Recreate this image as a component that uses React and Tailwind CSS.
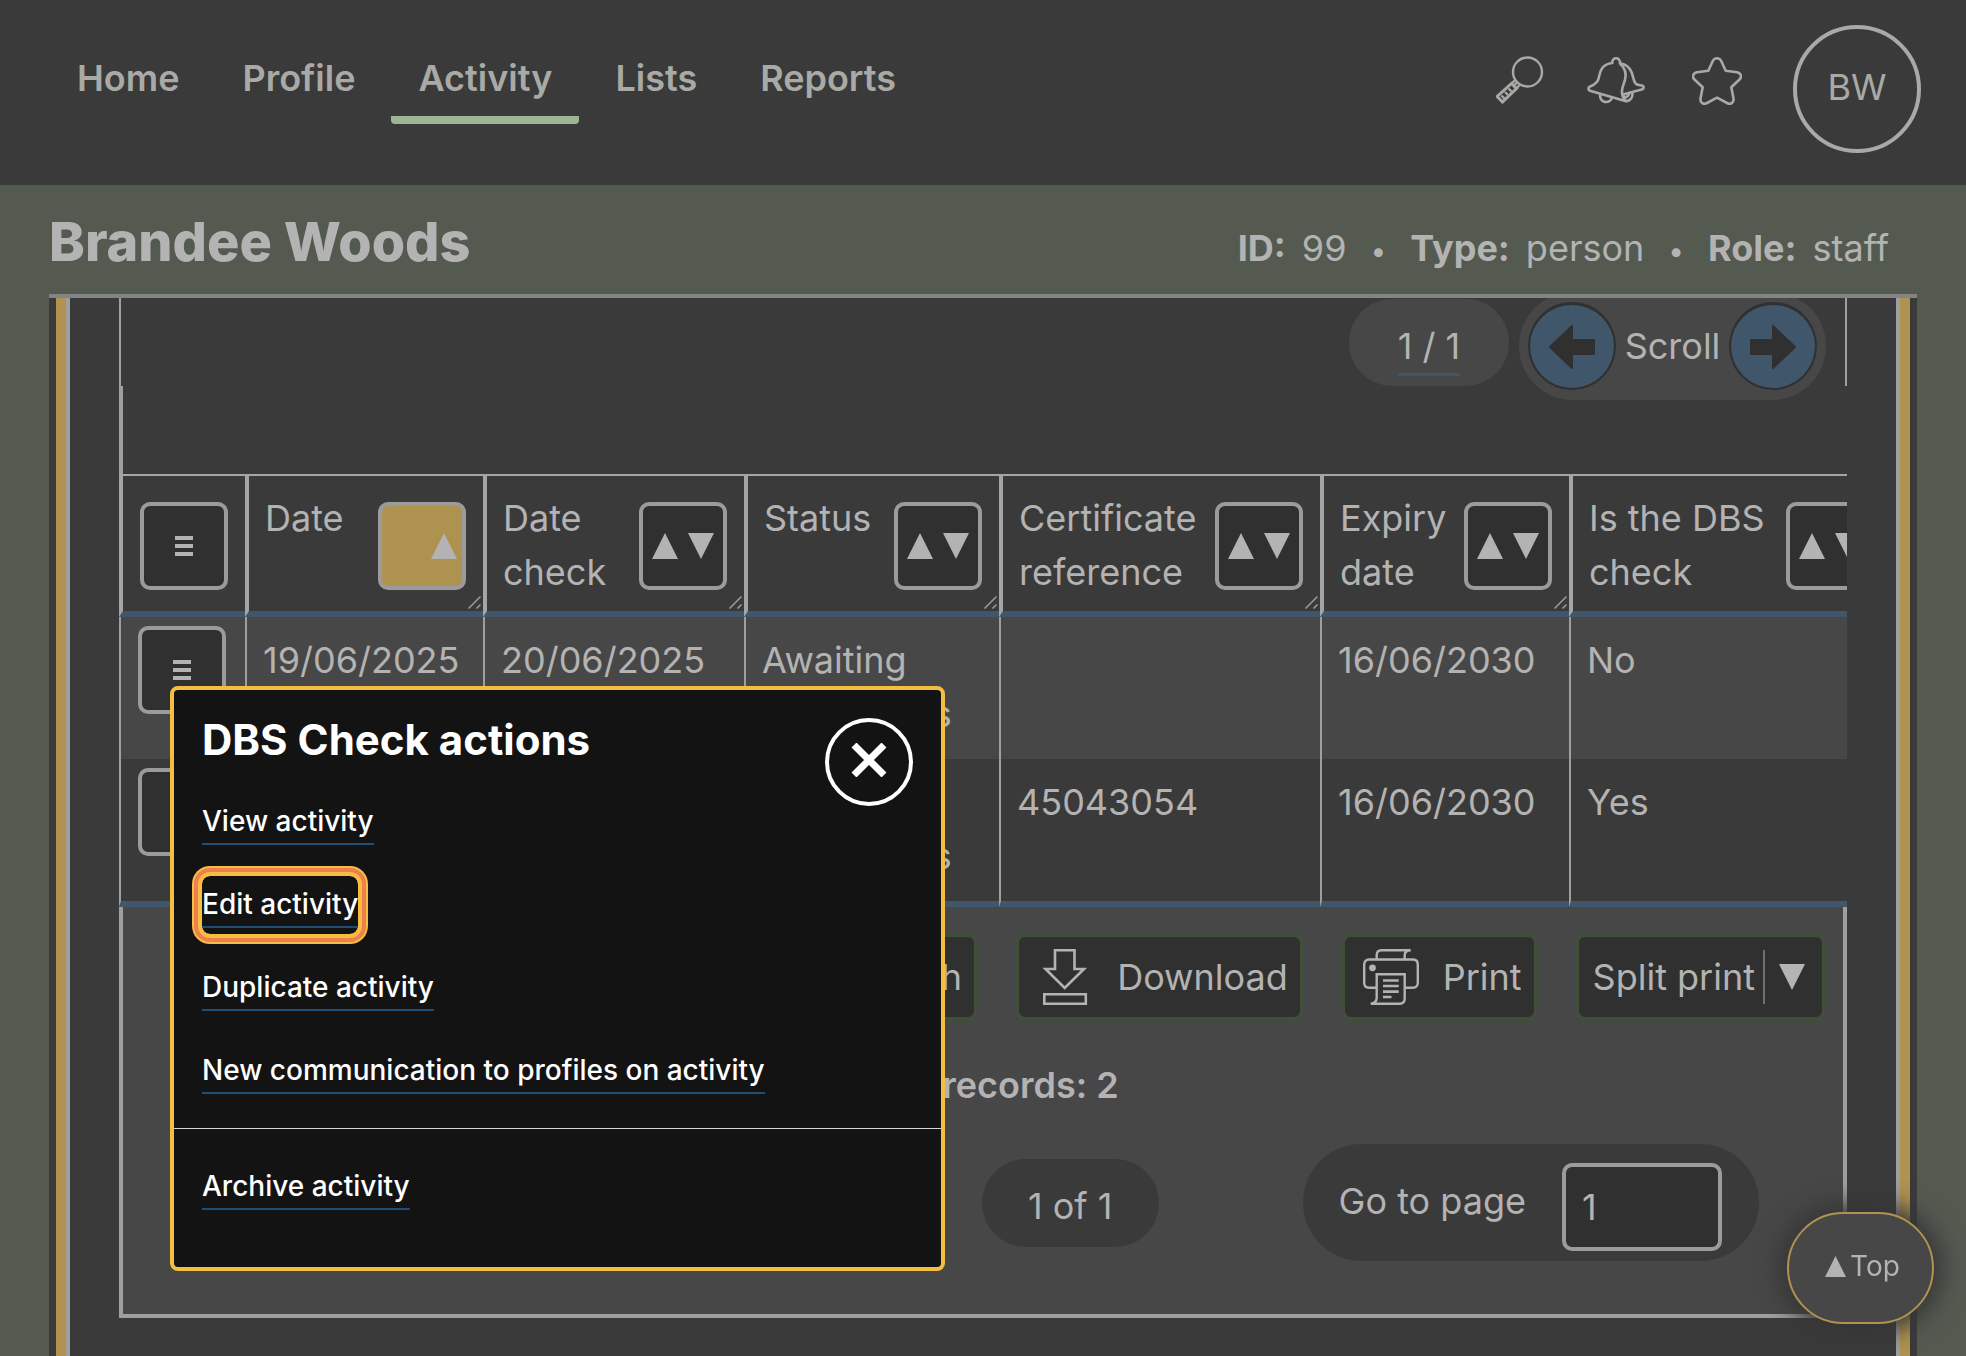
import React from "react";

const NAV = ["Home", "Profile", "Activity", "Lists", "Reports"];

const COLUMNS = [
  { label: "Date", width: "w-[238px]", active: true },
  { label: "Date check", width: "w-[261px]" },
  { label: "Status", width: "w-[255px]" },
  { label: "Certificate reference", width: "w-[321px]" },
  { label: "Expiry date", width: "w-[249px]" },
  { label: "Is the DBS check", width: "w-[322px]" },
];

const ROWS = [
  ["19/06/2025", "20/06/2025", "Awaiting documents", "", "16/06/2030", "No"],
  ["", "", "Awaiting documents", "45043054", "16/06/2030", "Yes"],
];

const ACTIONS = [
  "View activity",
  "Edit activity",
  "Duplicate activity",
  "New communication to profiles on activity",
];

function SearchIcon() {
  return (
    <svg width="48" height="48" viewBox="0 0 48 48" fill="none" stroke="currentColor" strokeWidth="2.400" aria-hidden="true">
      <circle cx="31.500" cy="16" r="14.500" />
      <path d="M21.500 26l-3.500 3.500M18.500 24.500l-3 3.500M23.500 29l-3 3.500" />
      <path d="M15.500 27.500l5 5L6.500 46 1.200 40.500z" strokeWidth="3" />
      <path d="M5.500 39.500l3 3M9 36l3 3M12.500 32.500l3 3" />
    </svg>
  );
}

function BellIcon() {
  return (
    <svg width="58" height="48" viewBox="0 0 58 48" fill="none" stroke="currentColor" strokeWidth="2.600" strokeLinejoin="round" aria-hidden="true">
      <path d="M25.300 6C25 2.500 27 1.300 29 1.300S33.200 2.500 33 6.500C38 11 40 16 38 23c-2 6-3.500 9-3 13 .5 4 2 6.500 4 8.200L3 33.800C1 33.200.8 30.500 3 29.500c5-2 7-3.500 8.300-7C12.500 18 12.500 15 15 11.500c2-3 6-5 10.300-5.500z" />
      <path d="M33 6.500c6 .5 9.500 4 11.500 8.500 1.500 4 2 9 4 11.500 1.500 1.500 4.500 1.500 7 2.200 1.500.8 1.500 3 0 3.600L36 37.500" />
      <path d="M13 37.500c0 9 9 9.500 12 3.500M45.500 35.500c.5 4.500-2 8.500-6.500 8.700M36.500 38.500c1 3 3 3 6-2" />
    </svg>
  );
}

function StarIcon() {
  return (
    <svg width="50" height="48" viewBox="0 0 50 48" fill="none" stroke="currentColor" strokeWidth="2.600" strokeLinejoin="round" aria-hidden="true">
      <path d="M21 3.500C22.500.5 27.500.5 29 3.500L33.700 13.700 45 15.200C49 16 50.200 20 47.500 22.500L39.300 30.300 41.500 41.500C42 46 38.500 48 35 46L25 40.700 15 46C11.500 48 8 46 8.500 41.500L10.700 30.300 2.500 22.500C-.2 20 1 16 5 15.200L16.300 13.700z" />
    </svg>
  );
}

function DownloadIcon() {
  return (
    <svg width="56" height="56" viewBox="-6 0 56 56" fill="none" stroke="currentColor" strokeWidth="2.600" aria-hidden="true">
      <path d="M12 1.300H31.500V20H41L21.700 39 2.500 20H12z" />
      <path d="M1.300 45.200H42.800V54.700H1.300z" />
    </svg>
  );
}

function PrintIcon() {
  return (
    <svg width="56" height="56" viewBox="0 0 56 56" fill="none" stroke="currentColor" strokeWidth="2.400" aria-hidden="true">
      <path d="M13.700 10.300V6c0-3 2-4.800 4.800-4.800H47.700C43.500 1.500 41.700 3 41.700 6v4.300" />
      <path d="M13.700 38.700H6c-3 0-4.800-2-4.800-5V15.500c0-3 2-5 4.800-5H50c3 0 4.800 2 4.800 5v18.200c0 3-2 5-4.800 5H41.700" />
      <path d="M13.700 25.300H41.700V49.500c0 3.500-2 5.300-5 5.300H7.700c4-.5 6-2 6-6z" />
      <path d="M20 31.500H35.700M20 37H35.700M20 42.600H35.700M20 48H28.500" strokeWidth="2.600" />
      <circle cx="9.500" cy="18.800" r="3.400" fill="currentColor" stroke="none" />
    </svg>
  );
}

function Triangle({ down, className = "h-[26px] w-[26px]" }) {
  return (
    <svg className={className} viewBox="0 0 26 26" fill="currentColor" aria-hidden="true">
      <path d={down ? "M0 0H26L13 26z" : "M0 26H26L13 0z"} />
    </svg>
  );
}

function SortButton({ label, active }) {
  return (
    <button
      type="button"
      aria-label={`Sort by ${label}`}
      className={
        "mt-[11px] flex size-[88px] shrink-0 items-center rounded-[10px] border-4 border-[#9b9b9b] " +
        (active ? "justify-end bg-[#ad9250] pr-[5px]" : "justify-center gap-2.5 bg-[#303030]")
      }
    >
      <Triangle />
      {!active && <Triangle down />}
    </button>
  );
}

function MenuButton({ label }) {
  return (
    <button
      type="button"
      aria-label={label}
      className="flex size-[88px] flex-col items-center justify-center gap-1 rounded-[10px] border-4 border-[#9b9b9b] bg-[#303030]"
    >
      <span className="h-1 w-[18px] bg-[#b3b3b3]" />
      <span className="h-1 w-[18px] bg-[#b3b3b3]" />
      <span className="h-1 w-[18px] bg-[#b3b3b3]" />
    </button>
  );
}

function ScrollButton({ label, right }) {
  return (
    <button
      type="button"
      aria-label={label}
      className="flex size-[88px] items-center justify-center rounded-full border-2 border-t-[3px] border-[#303030] bg-[#40566a] text-[#303030]"
    >
      <svg width="46" height="44" viewBox="0 0 46 44" fill="currentColor" stroke="currentColor" strokeWidth="2" strokeLinejoin="round" aria-hidden="true">
        <path d={right ? "M45 22L23 1V15H1V29H23V43z" : "M1 22L23 1V15H45V29H23V43z"} />
      </svg>
    </button>
  );
}

function ToolButton({ icon, children }) {
  return (
    <button
      type="button"
      className="flex h-[88px] items-center gap-6 rounded-[10px] border-4 border-[#3f4f3a] bg-[#303030] pr-3 pl-[18px]"
    >
      {icon}
      {children}
    </button>
  );
}

function ActionLink({ children, focused }) {
  return (
    <a
      href="#"
      className={
        "inline-block py-1.5 " +
        (focused ? "rounded-lg shadow-[0_0_0_4px_#f5be41,0_0_0_8px_#f07f50,0_0_0_10px_#f5be41]" : "")
      }
    >
      <span className="block border-b-2 border-[#1f4e75] leading-[44px]">{children}</span>
    </a>
  );
}

function ActionsDialog() {
  return (
    <div
      role="dialog"
      aria-labelledby="actions-title"
      className="absolute top-[388px] left-[51px] z-10 w-[775px] rounded-lg border-4 border-[#f5be41] bg-[#131313] text-[28px] font-medium text-white"
    >
      <div className="flex items-start justify-between px-7 pt-6">
        <h2 id="actions-title" className="text-[42px] leading-[52px] font-bold">DBS Check actions</h2>
        <button type="button" aria-label="Close" className="mt-1 -mb-9 flex size-[88px] items-center justify-center rounded-full border-4 border-white pb-1">
          <svg width="36" height="34" viewBox="0 0 36 34" stroke="white" strokeWidth="7" aria-hidden="true">
            <path d="M3 2L33 32M33 2L3 32" />
          </svg>
        </button>
      </div>
      <ul className="flex flex-col items-start gap-[25px] px-7 pt-[23px] pb-7">
        {ACTIONS.map((a) => (
          <li key={a} className="flex">
            <ActionLink focused={a === "Edit activity"}>{a}</ActionLink>
          </li>
        ))}
      </ul>
      <div className="flex border-t border-[#d5d5d5] px-7 pt-[29px] pb-[51px]">
        <ActionLink>Archive activity</ActionLink>
      </div>
    </div>
  );
}

function ResizeHandle() {
  return (
    <svg className="absolute right-0.5 bottom-0.5" width="13" height="13" viewBox="0 0 13 13" stroke="#9b9b9b" strokeWidth="1.500" aria-hidden="true">
      <path d="M.5 12.500L12.500 .5M8.500 12.500L12.500 8.500" />
    </svg>
  );
}

function RecordsTable() {
  return (
    <div className="overflow-hidden">
      <table className="w-[1772px] table-fixed border-separate border-spacing-0 leading-[54px]">
        <thead>
          <tr className="h-[143px]">
            <th className="w-[126px] border-t-2 border-b-[6px] border-l-4 border-t-[#a5a5a5] border-b-[#40566a] border-l-[#a5a5a5] px-[17px] pt-[26px] align-top">
              <MenuButton label="Table actions" />
            </th>
            {COLUMNS.map((c) => (
              <th
                key={c.label}
                className={
                  "relative border-t-2 border-b-[6px] border-l-4 border-t-[#a5a5a5] border-b-[#40566a] border-l-[#a5a5a5] pt-[15px] pr-[17px] pl-4 text-left align-top font-normal " +
                  c.width
                }
              >
                <div className="flex items-start justify-between">
                  <span>{c.label}</span>
                  <SortButton label={c.label} active={c.active} />
                </div>
                <ResizeHandle />
              </th>
            ))}
          </tr>
        </thead>
        <tbody>
          {ROWS.map((r, i) => {
            const edge = i === 1 ? "border-b-[6px] border-b-[#40566a] " : "bg-[#474747] ";
            return (
              <tr key={i} className={i === 1 ? "h-[148px]" : "h-[142px]"}>
                <td className={edge + "border-l-2 border-l-[#9f9f9f] pt-[9px] pl-[17px] align-top"}>
                  <MenuButton label={`Actions for row ${i + 1}`} />
                </td>
                {r.map((v, j) => (
                  <td key={j} className={edge + "border-l-2 border-l-[#9f9f9f] pt-4 pr-2 pl-4 align-top"}>
                    {v}
                  </td>
                ))}
              </tr>
            );
          })}
        </tbody>
      </table>
    </div>
  );
}

export default function App() {
  return (
    <div className="flex min-h-screen flex-col bg-[#555a51] font-[Inter,sans-serif] text-[36px] leading-[54px] text-[#b3b3b3]">
      <header className="flex items-start justify-between bg-[#3a3a3a] pt-[25px] pr-[45px] pb-8 pl-[50px] text-[#a9aaa5]">
        <nav className="mt-[26px] flex gap-[9px] font-semibold">
          {NAV.map((n) => (
            <a
              key={n}
              href="#"
              className={
                "rounded-b-[4px] border-b-8 px-[27px] pb-[11px] " +
                (n === "Activity" ? "border-[#9db592]" : "border-transparent")
              }
            >
              {n}
            </a>
          ))}
        </nav>
        <div className="flex items-start">
          <button type="button" aria-label="Search" className="mt-[31px] mr-[43px]"><SearchIcon /></button>
          <button type="button" aria-label="Notifications" className="mt-8 mr-[47px]"><BellIcon /></button>
          <button type="button" aria-label="Favourites" className="mt-8 mr-[51px]"><StarIcon /></button>
          <button type="button" className="flex size-32 items-center justify-center rounded-full border-4 border-[#a9aaa5] pb-1">BW</button>
        </div>
      </header>

      <main className="mx-[49px] flex flex-1 flex-col">
        <div className="flex items-baseline justify-between border-b-4 border-[#848484] pt-[21px] pr-7 pb-4">
          <h1 className="text-[54px] leading-[72px] font-extrabold">Brandee Woods</h1>
          <div className="flex items-baseline gap-6">
            <span><b className="mr-4">ID:</b>99</span>
            <span className="text-[28px]">•</span>
            <span><b className="mr-4">Type:</b>person</span>
            <span className="text-[28px]">•</span>
            <span><b className="mr-4">Role:</b>staff</span>
          </div>
        </div>

        <div className="flex flex-1 flex-col overflow-hidden bg-[#3a3a3a] px-[7px]">
          <div className="flex-1 border-x-[10px] border-[#b09350]">
            <div className="h-full border-x-4 border-[#9f9f9f] pr-[49px] pb-[38px] pl-[49px]">
              <section className="relative">
                <div className="flex h-[88px] items-start justify-end gap-2.5 border-x-2 border-[#9f9f9f] pr-[19px]">
                  <div className="mt-px flex h-[87px] w-40 items-start justify-center rounded-full bg-[#474747] pt-5">
                    <a href="#" className="border-b-[3px] border-[#40566a]">1 / 1</a>
                  </div>
                  <div className="-mt-1.5 flex h-[108px] w-[307px] items-center justify-between rounded-full bg-[#474747] px-[9px]">
                    <ScrollButton label="Scroll left" />
                    <span>Scroll</span>
                    <ScrollButton label="Scroll right" right />
                  </div>
                </div>
                <div className="h-[88px] border-l-4 border-[#9f9f9f]" />

                <RecordsTable />

                <div className="border-x-4 border-b-4 border-[#9f9f9f] bg-[#474747] pt-[26px] pb-[53px]">
                  <div className="flex justify-end gap-[37px] pr-[17px]">
                    <ToolButton icon={<SearchIcon />}>Search</ToolButton>
                    <ToolButton icon={<DownloadIcon />}>Download</ToolButton>
                    <ToolButton icon={<PrintIcon />}>Print</ToolButton>
                    <button type="button" className="flex h-[88px] items-center rounded-[10px] border-4 border-[#3f4f3a] bg-[#303030] pr-[17px] pl-3.5">
                      Split print
                      <span className="mr-3.5 ml-2 h-[54px] w-0.5 bg-[#6f6f6f]" />
                      <Triangle down />
                    </button>
                  </div>
                  <p className="mt-[37px] text-center font-semibold">Total records: 2</p>
                  <div className="mt-8 flex items-center justify-end gap-36 pr-[84px]">
                    <div className="flex h-[88px] w-[177px] items-center justify-center rounded-full bg-[#3a3a3a] pt-1.5">1 of 1</div>
                    <div className="flex h-[117px] items-center rounded-full bg-[#3a3a3a] pr-[37px] pl-9">
                      <label htmlFor="page" className="mr-9 pb-1">Go to page</label>
                      <input
                        id="page"
                        type="text"
                        defaultValue="1"
                        className="mt-2 h-[88px] w-40 rounded-[10px] border-4 border-[#9b9b9b] bg-[#303030] px-4"
                      />
                    </div>
                  </div>
                </div>

                <ActionsDialog />
              </section>
            </div>
          </div>
        </div>
      </main>

      <button
        type="button"
        className="fixed right-8 bottom-8 z-20 flex h-28 w-[147px] items-center justify-center gap-1 rounded-full border-2 border-[#b09350] bg-[#474747] pb-1 pl-1 text-[28px] shadow-[0_0_24px_8px_#363636]"
      >
        <Triangle className="size-[21px]" />
        Top
      </button>
    </div>
  );
}
